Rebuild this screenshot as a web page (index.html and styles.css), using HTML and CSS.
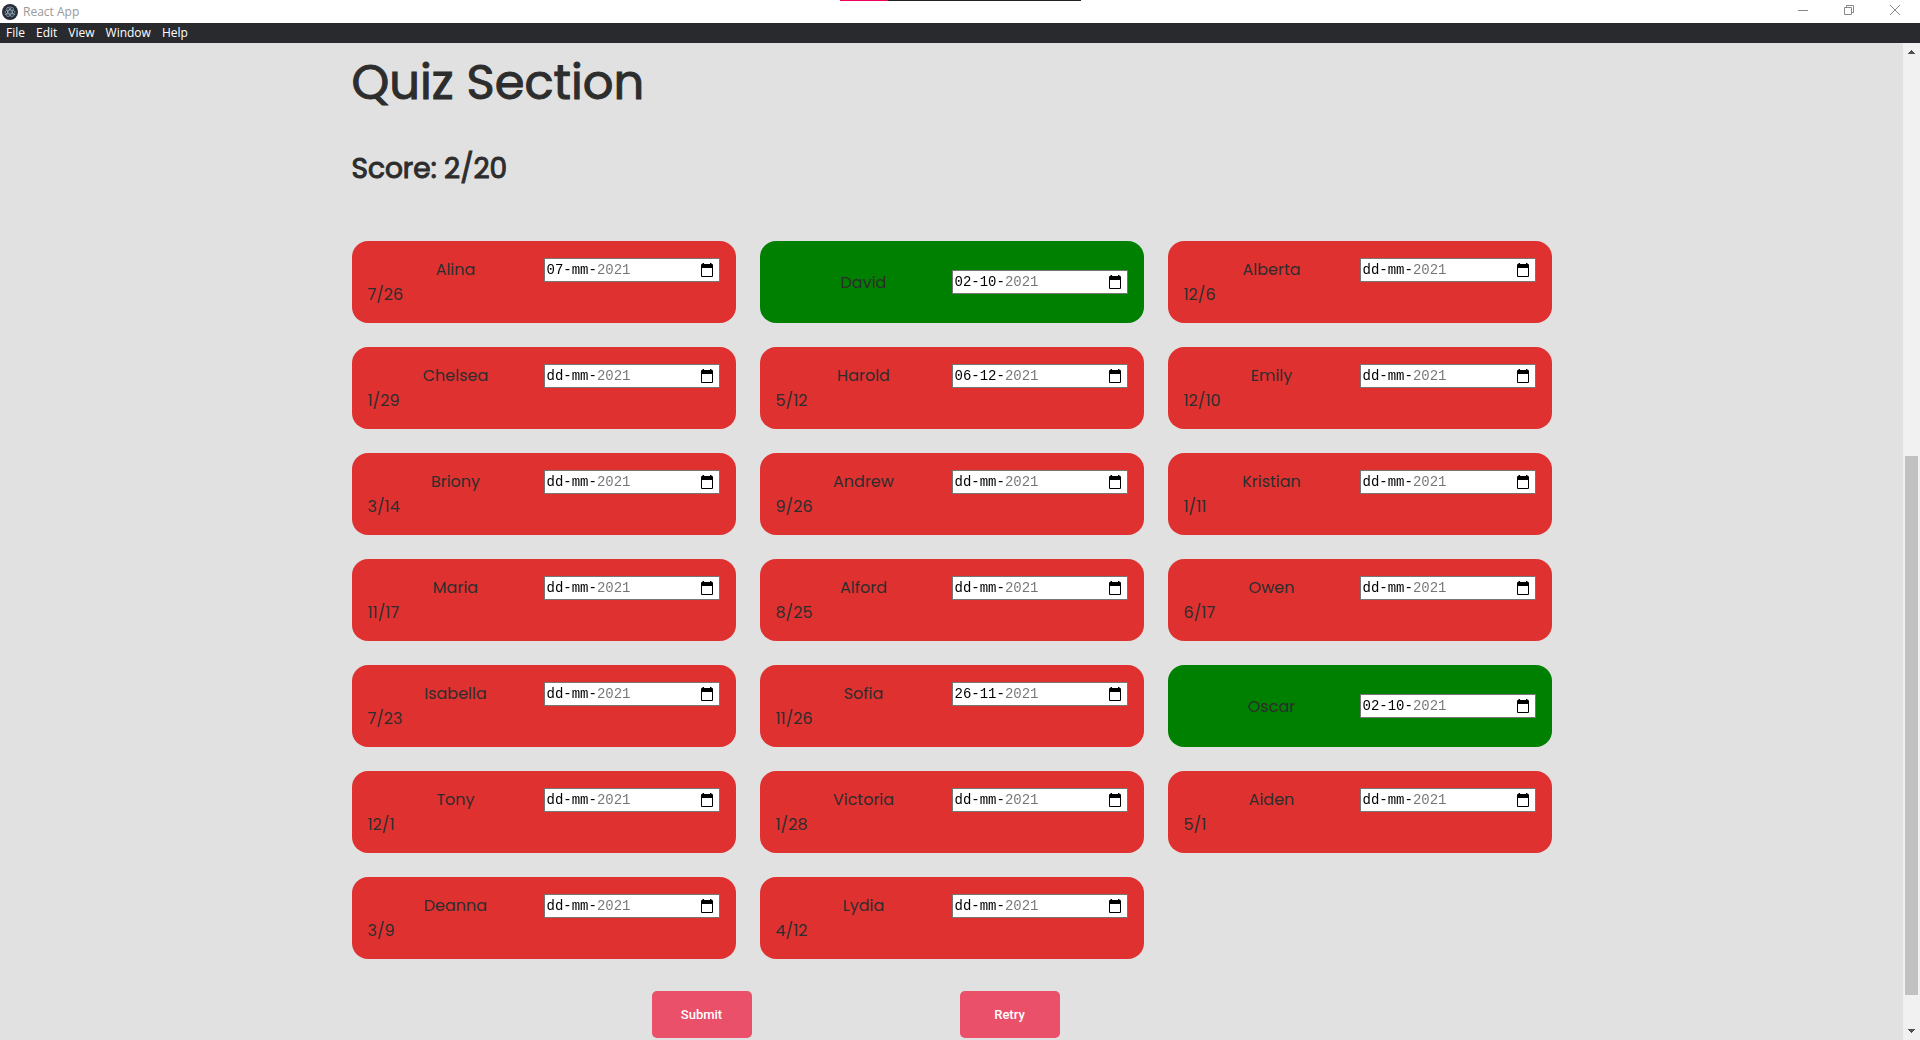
FILE: index.html
```html
<!DOCTYPE html>
<html lang="en">
<head>
<meta charset="utf-8">
<title>React App</title>
<link rel="stylesheet" href="styles.css">
</head>
<body>
<header class="titlebar">
  <div class="progress" aria-hidden="true"></div>
  <svg class="app-icon" viewBox="0 0 16 16" aria-hidden="true">
    <circle cx="8" cy="8" r="8" fill="#2b2e3a"/>
    <g fill="none" stroke="#b5dfe8" stroke-width=".7" opacity=".75">
      <ellipse cx="8" cy="8" rx="5.2" ry="2"/>
      <ellipse cx="8" cy="8" rx="5.2" ry="2" transform="rotate(60 8 8)"/>
      <ellipse cx="8" cy="8" rx="5.2" ry="2" transform="rotate(120 8 8)"/>
    </g>
    <g fill="#b5dfe8" opacity=".8"><circle cx="8" cy="8" r=".6"/><circle cx="3.4" cy="10.3" r=".6"/><circle cx="12.6" cy="10.3" r=".6"/><circle cx="8" cy="2.800" r=".6"/></g>
  </svg>
  <span class="app-name">React App</span>
  <div class="window-controls">
    <button type="button" aria-label="Minimize"><svg viewBox="0 0 12 12"><path d="M1 6.500h10"/></svg></button>
    <button type="button" aria-label="Restore"><svg viewBox="0 0 12 12"><path d="M1.500 3.500h7v7h-7zM3.500 3.500v-2h7v7h-2"/></svg></button>
    <button type="button" aria-label="Close"><svg viewBox="0 0 12 12"><path d="M1 1l10 10M11 1L1 11"/></svg></button>
  </div>
</header>
<nav class="menubar">
  <button type="button">File</button>
  <button type="button">Edit</button>
  <button type="button">View</button>
  <button type="button">Window</button>
  <button type="button">Help</button>
</nav>
<div class="viewport">
  <main class="page">
    <div class="content">
      <h1>Quiz Section</h1>
      <h2>Score: 2/20</h2>
      <form class="quiz">
        <div class="cards" id="cards"></div>
        <div class="actions">
          <button type="button">Submit</button>
          <button type="button">Retry</button>
        </div>
      </form>
    </div>
  </main>
  <div class="scrollbar" aria-hidden="true">
    <svg class="arrow" viewBox="0 0 17 17"><path d="M5 11h7v-1h-1v-1h-1v-1h-1v-1h-1v1h-1v1h-1v1h-1z"/></svg>
    <div class="track"><div class="thumb"></div></div>
    <svg class="arrow" viewBox="0 0 17 17"><path d="M5 6h7v1h-1v1h-1v1h-1v1h-1v-1h-1v-1h-1v-1h-1z"/></svg>
  </div>
</div>
<script src="quiz.js"></script>
</body>
</html>
```

FILE: styles.css
```css
* { box-sizing: border-box; }

body {
  margin: 0;
  height: 100vh;
  display: flex;
  flex-direction: column;
  overflow: hidden;
  background: #e1e1e1;
  color: #2d2d2d;
  font: 16px/25px Poppins, Inter, sans-serif;
}

button { font: inherit; border: 0; cursor: pointer; }

.titlebar {
  position: relative;
  flex: none;
  height: 23px;
  display: flex;
  align-items: center;
  gap: 5px;
  padding-left: 2px;
  background: #fff;
  color: #999;
  font: 12px/16px "Open Sans", sans-serif;
}
.progress {
  position: absolute;
  top: 0;
  left: 840px;
  width: 241px;
  height: 1px;
  background: linear-gradient(to right, #f0005c 20%, #222 20%);
}
.app-icon { width: 16px; height: 16px; }
.window-controls {
  align-self: flex-start;
  display: flex;
  margin-left: auto;
  padding-right: 2px;
}
.window-controls button {
  width: 46px;
  height: 20px;
  padding: 0;
  display: grid;
  place-items: center;
  background: none;
}
.window-controls svg { width: 12px; height: 12px; fill: none; stroke: #888; }

.menubar {
  flex: none;
  height: 20px;
  display: flex;
  gap: 1px;
  padding-left: 1px;
  background: #292a2d;
}
.menubar button {
  padding: 0 5px;
  background: none;
  color: #fff;
  font: 12px/20px "Open Sans", sans-serif;
}

.viewport { flex: 1; min-height: 0; display: flex; }
.page { flex: 1; min-width: 0; overflow: hidden; }
.content { max-width: 1200px; margin: 0 auto; }

h1, h2 { font-weight: 400; -webkit-text-stroke: 1px; }
h1 { margin: 0; padding-top: 4px; font-size: 48px; line-height: 72px; }
h2 { margin: 28px 0 50px; font-size: 28px; line-height: 44px; }

.cards {
  display: grid;
  grid-template-columns: repeat(3, 1fr);
  gap: 24px;
}
.card {
  display: flex;
  flex-direction: column;
  justify-content: center;
  padding: 16px;
  border-radius: 16px;
  background: #e03131;
}
.card.correct { background: green; }
.question {
  display: grid;
  grid-template-columns: repeat(2, minmax(0, 1fr));
  align-items: center;
}
.question label { text-align: center; }
.answer { margin: 0; }

.date-field {
  display: flex;
  align-items: center;
  height: 24px;
  padding: 0 5px 0 2px;
  border: 1px solid #767676;
  background: #fff;
}
.date-field input {
  flex: 1;
  min-width: 0;
  padding: 0;
  border: 0;
  outline: 0;
  font: 14px/20px "Courier New", "Liberation Mono", monospace;
  background: linear-gradient(to right, #000 50px, #757575 50px);
  background-clip: text;
  -webkit-background-clip: text;
  -webkit-text-fill-color: transparent;
}
.date-field button { display: flex; padding: 0; background: none; }
.date-field svg { width: 14px; height: 16px; }

.actions { display: flex; gap: 208px; margin-top: 32px; padding-left: 25%; }
.actions button {
  width: 100px;
  height: 47px;
  border-radius: 5px;
  background: #eb506a;
  color: #fff;
  font: 500 13px/16px Roboto, sans-serif;
}

.scrollbar { width: 17px; display: flex; flex-direction: column; background: #f1f1f1; }
.arrow { flex: none; width: 17px; height: 17px; fill: #505050; shape-rendering: crispEdges; }
.track {
  flex: 1;
  display: grid;
  grid-template-rows: 396fr 539fr 28fr;
  padding: 0 2px;
}
.thumb { grid-row: 2; background: #c1c1c1; }
```

FILE: quiz.js
```js
const people = [
  ["Alina", "07-mm-2021", "7/26"],
  ["David", "02-10-2021", null],
  ["Alberta", "dd-mm-2021", "12/6"],
  ["Chelsea", "dd-mm-2021", "1/29"],
  ["Harold", "06-12-2021", "5/12"],
  ["Emily", "dd-mm-2021", "12/10"],
  ["Briony", "dd-mm-2021", "3/14"],
  ["Andrew", "dd-mm-2021", "9/26"],
  ["Kristian", "dd-mm-2021", "1/11"],
  ["Maria", "dd-mm-2021", "11/17"],
  ["Alford", "dd-mm-2021", "8/25"],
  ["Owen", "dd-mm-2021", "6/17"],
  ["Isabella", "dd-mm-2021", "7/23"],
  ["Sofia", "26-11-2021", "11/26"],
  ["Oscar", "02-10-2021", null],
  ["Tony", "dd-mm-2021", "12/1"],
  ["Victoria", "dd-mm-2021", "1/28"],
  ["Aiden", "dd-mm-2021", "5/1"],
  ["Deanna", "dd-mm-2021", "3/9"],
  ["Lydia", "dd-mm-2021", "4/12"],
];

document.getElementById("cards").innerHTML = people.map(([name, date, answer], i) => `
  <div class="card${answer ? "" : " correct"}">
    <div class="question">
      <label for="date-${i}">${name}</label>
      <div class="date-field">
        <input type="text" id="date-${i}" value="${date}">
        <button type="button" aria-label="Pick date">
          <svg viewBox="0 0 14 16"><path fill="#000" fill-rule="evenodd" d="M2.500 1h1.500v1h6V1h1.500v1h.5q1 0 1 1v11q0 1-1 1H2q-1 0-1-1V3q0-1 1-1h.5zM2 6v8h10V6z"/></svg>
        </button>
      </div>
    </div>
    ${answer ? `<p class="answer">${answer}</p>` : ""}
  </div>`).join("");
```
